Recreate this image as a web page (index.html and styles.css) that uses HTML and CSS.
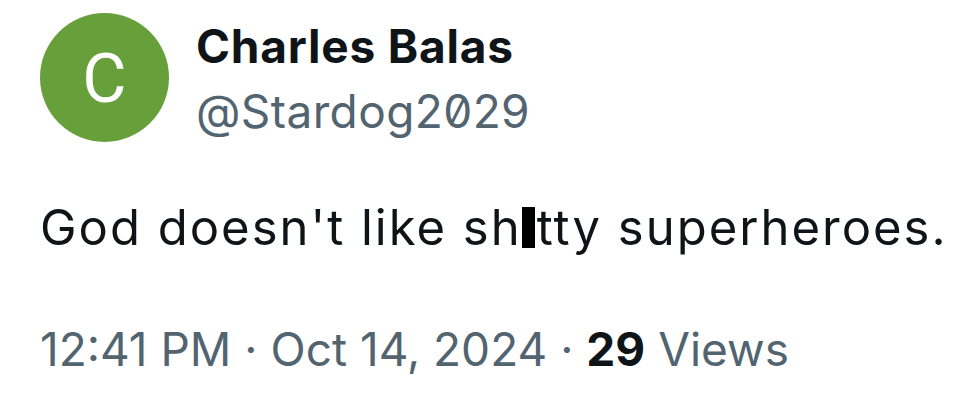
FILE: index.html
```html
<!DOCTYPE html>
<html>
<head>
  <title>Charles Balas on X</title>
  <link rel="stylesheet" href="styles.css">
</head>
<body>
  <div class="tweet">
    <div class="author">
      <div class="avatar">C</div>
      <div class="names">
        <div class="name">Charles Balas</div>
        <div class="handle">@Stardog2029</div>
      </div>
    </div>

    <p class="text">God doesn't like sh<span class="censor">i</span>tty superheroes.</p>

    <div class="meta">
      12:41 PM <span class="dot">·</span> Oct 14, 2024 <span class="dot">·</span> <b class="count">29</b> Views
    </div>
  </div>
</body>
</html>
```

FILE: styles.css
```css
body {
  margin: 0;
  background-color: #ffffff;
  font-family: Inter, "Liberation Sans", sans-serif;
  color: #0f1419;
}

.tweet {
  padding: 13px 0 0 40px;
}

.author {
  display: flex;
  align-items: flex-start;
  gap: 27px;
}

.avatar {
  width: 129px;
  height: 129px;
  border-radius: 50%;
  background-color: #67a03a;
  color: #ffffff;
  font-family: Roboto, sans-serif;
  font-size: 68px;
  line-height: 132px;
  text-align: center;
  flex-shrink: 0;
}

.names {
  padding-top: 3px;
}

.name {
  font-size: 46px;
  font-weight: 700;
  line-height: 60px;
  letter-spacing: 0.8px;
}

.handle {
  margin-top: 5px;
  font-size: 46px;
  line-height: 60px;
  letter-spacing: 0.4px;
  color: #536471;
  font-variant-numeric: slashed-zero;
}

.text {
  margin: 56px 0 0 0;
  font-size: 49px;
  line-height: 60px;
  letter-spacing: 2px;
}

/* redacted letter */
.censor {
  display: inline-block;
  width: 13px;
  line-height: 41px;
  letter-spacing: 0;
  text-align: center;
  background-color: #000000;
  color: #000000;
  margin-right: 2px;
}

.meta {
  margin-top: 61px;
  font-size: 46px;
  line-height: 60px;
  color: #536471;
}

.count {
  color: #0f1419;
}
```
